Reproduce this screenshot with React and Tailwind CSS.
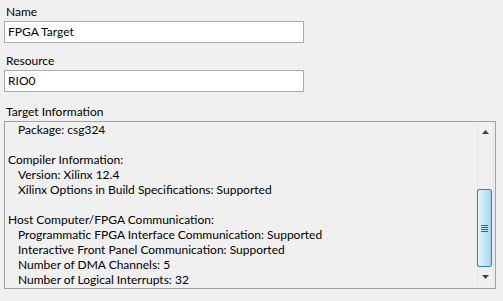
import React from "react";

const F = { fontFamily: 'Lato, "Open Sans", sans-serif' };

function Field({ label, value, gap }) {
  return (
    <div className={`flex flex-col ${gap}`}>
      <div className="h-[17px] pl-[2px] leading-[16px] text-[12px] text-black">{label}</div>
      <div className="w-[300px] h-[22px] border border-[#abadb3] bg-white pl-[3px] text-[12px] leading-[20px] text-black">
        {value}
      </div>
    </div>
  );
}

const lines = [
  ["Package: csg324", 1],
  ["", 0],
  ["Compiler Information:", 0],
  ["Version: Xilinx 12.4", 1],
  ["Xilinx Options in Build Specifications: Supported", 1],
  ["", 0],
  ["Host Computer/FPGA Communication:", 0],
  ["Programmatic FPGA Interface Communication: Supported", 1],
  ["Interactive Front Panel Communication: Supported", 1],
  ["Number of DMA Channels: 5", 1],
  ["Number of Logical Interrupts: 32", 1],
];

export default function App() {
  return (
    <div className="w-[503px] h-[301px] bg-[#f0f0f0] pt-[4px] pl-[4px] overflow-hidden" style={F}>
      <div className="flex flex-col">
        <Field label="Name" value="FPGA Target" gap="" />
        <Field label="Resource" value="RIO0" gap="mt-[10px]" />
        <div className="flex flex-col mt-[12px]">
          <div className="h-[17px] pl-[2px] leading-[16px] text-[12px] text-black">Target Information</div>
          <div className="w-[492px] h-[168px] border border-[#a0a0a0] bg-[#f0f0f0] flex">
            <div className="flex-1 pt-0 pl-[3px] text-[12px] leading-[15px] text-black">
              {lines.map(([t, ind], i) => (
                <div key={i} className={`h-[15px] whitespace-nowrap ${ind ? "pl-[10px]" : ""}`}>{t}</div>
              ))}
            </div>
            <div className="w-[17px] mr-[1px] my-[1px] flex flex-col bg-[#f0f0f0] border-x border-[#e6e6e6]">
              <div className="h-[17px] flex items-center justify-center">
                <svg width="7" height="4" viewBox="0 0 7 4"><path d="M3.5 0 L7 4 L0 4 Z" fill="#404040" /></svg>
              </div>
              <div className="h-[49px]" />
              <div className="h-[78px] mx-[-1px] w-[15px] rounded-[2px] border border-[#3c7fb1] bg-gradient-to-r from-[#e3f4fc] via-[#c4e5f6] to-[#9ed5f2] flex items-center justify-center">
                <div className="flex flex-col gap-[1px]">
                  <div className="w-[7px] h-[1px] bg-[#2a6e96]" />
                  <div className="w-[7px] h-[1px] bg-[#2a6e96]" />
                  <div className="w-[7px] h-[1px] bg-[#2a6e96]" />
                  <div className="w-[7px] h-[1px] bg-[#2a6e96]" />
                </div>
              </div>
              <div className="flex-1 flex items-center justify-center">
                <svg width="7" height="4" viewBox="0 0 7 4"><path d="M0 0 L7 0 L3.5 4 Z" fill="#404040" /></svg>
              </div>
            </div>
          </div>
        </div>
      </div>
    </div>
  );
}
